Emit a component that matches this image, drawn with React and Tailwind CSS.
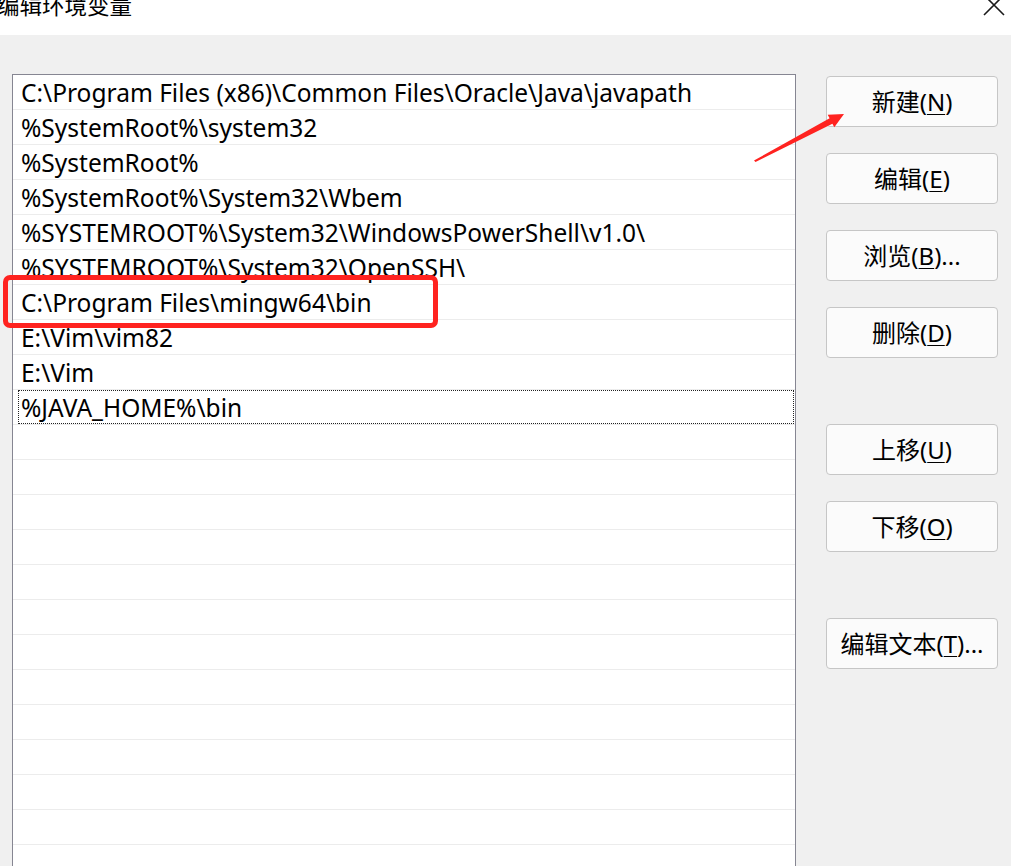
import React from "react";

const rows = [
  "C:\\Program Files (x86)\\Common Files\\Oracle\\Java\\javapath",
  "%SystemRoot%\\system32",
  "%SystemRoot%",
  "%SystemRoot%\\System32\\Wbem",
  "%SYSTEMROOT%\\System32\\WindowsPowerShell\\v1.0\\",
  "%SYSTEMROOT%\\System32\\OpenSSH\\",
  "C:\\Program Files\\mingw64\\bin",
  "E:\\Vim\\vim82",
  "E:\\Vim",
  "%JAVA_HOME%\\bin",
];

const allRows = [...rows, ...Array(14).fill("")];

function Btn({ label, mn, tail = "", className = "" }) {
  return (
    <button
      className={
        "w-[172px] h-[51px] shrink-0 rounded-[4px] border border-[#c6c6c6] bg-[#fbfbfb] text-[24px] text-black flex items-center justify-center " +
        className
      }
    >
      <span>
        {label}(<span className="underline underline-offset-[3px] decoration-1">{mn}</span>){tail}
      </span>
    </button>
  );
}

export default function App() {
  return (
    <div className="relative w-[1011px] h-[866px] overflow-hidden bg-[#f0f0f0] font-['Noto_Sans','Noto_Sans_CJK_SC',sans-serif] text-black">
      {/* title bar */}
      <div className="h-[35px] bg-white flex items-start">
        <div className="ml-[-3px] mt-[-6px] text-[22.5px] leading-[23px] whitespace-nowrap">编辑环境变量</div>
        <svg className="ml-auto mr-[6px] mt-[-6px]" width="22" height="22" viewBox="0 0 22 22">
          <path d="M1 1 L21 21 M21 1 L1 21" stroke="#1a1a1a" strokeWidth="1.6" />
        </svg>
      </div>

      {/* body */}
      <div className="flex items-start pt-[39px] pl-[12px]">
        <div className="w-[784px] h-[800px] shrink-0 border border-[#868692] bg-white overflow-hidden">
          {allRows.map((r, i) => (
            <div key={i} className="h-[35px] border-b border-[#ececec] pl-[5px] pr-[1px] flex items-stretch">
              <div
                className={
                  "flex-1 flex items-center pl-[2px] pt-[3px] text-[24.5px] leading-none whitespace-nowrap overflow-hidden border " +
                  (i === 9 ? "border-dotted border-[#222]" : "border-transparent")
                }
              >
                {r}
              </div>
            </div>
          ))}
        </div>

        <div className="ml-[30px] mt-[2px] flex flex-col">
          <Btn label="新建" mn="N" />
          <Btn label="编辑" mn="E" className="mt-[26px]" />
          <Btn label="浏览" mn="B" tail="..." className="mt-[26px]" />
          <Btn label="删除" mn="D" className="mt-[26px]" />
          <Btn label="上移" mn="U" className="mt-[66px]" />
          <Btn label="下移" mn="O" className="mt-[26px]" />
          <Btn label="编辑文本" mn="T" tail="..." className="mt-[66px]" />
        </div>
      </div>

      {/* red annotation box */}
      <div className="absolute left-[3px] top-[275px] w-[435px] h-[53px] border-[5px] border-[#ff2320] rounded-[7px]" />

      {/* red arrow */}
      <svg className="absolute left-0 top-0 pointer-events-none" width="1011" height="866">
        <polygon
          points="754,160.5 829.6,118.3 827.7,114.8 844,114 834.3,127.2 832.4,123.7 755.5,162"
          fill="#ff2320"
        />
      </svg>
    </div>
  );
}
